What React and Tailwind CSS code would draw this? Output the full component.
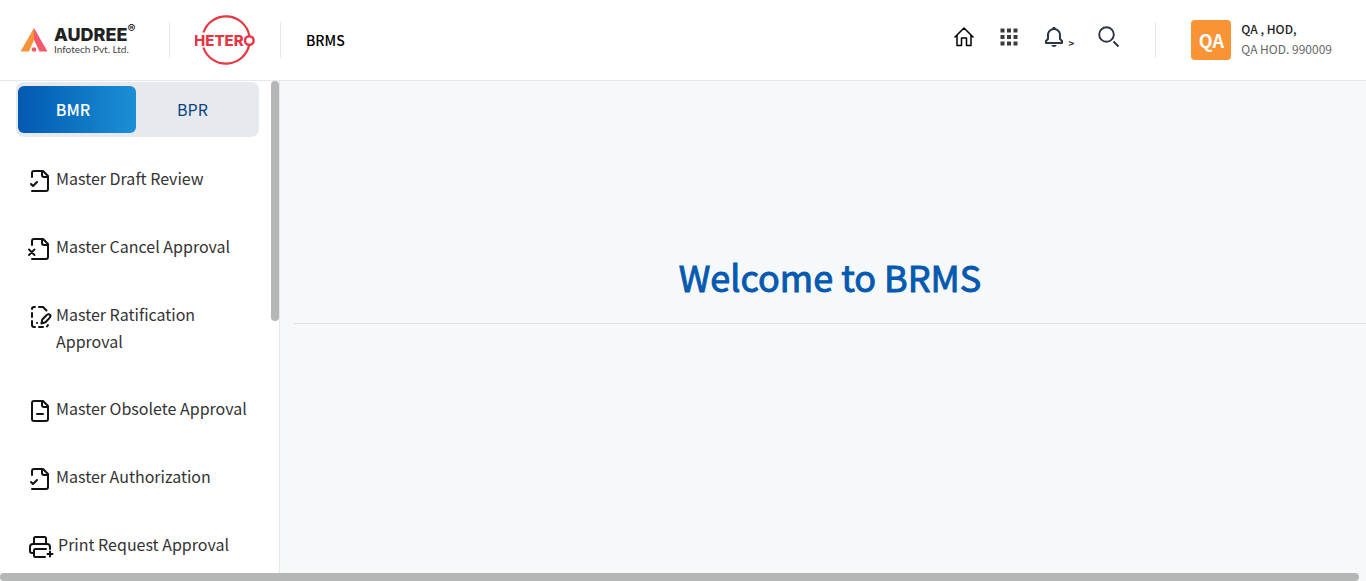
import React from "react";
import { BiBell } from "react-icons/bi";

function FileShell({ children, outline, fold = "M14 2v4a2 2 0 0 0 2 2h4" }) {
  return (
    <svg
      viewBox="0 0 24 24"
      className="size-6 shrink-0 overflow-visible"
      fill="none"
      stroke="currentColor"
      strokeWidth="2"
      strokeLinecap="round"
      strokeLinejoin="round"
      aria-hidden="true"
    >
      <path d={outline} />
      {fold && <path d={fold} />}
      {children}
    </svg>
  );
}

const OPEN_FILE = "M4 22h14a2 2 0 0 0 2-2V7l-5-5H6a2 2 0 0 0-2 2v4";

function FileCheckIcon() {
  return (
    <FileShell outline={OPEN_FILE}>
      <path d="m3 15 2 2 4-4" />
    </FileShell>
  );
}

function FileCancelIcon() {
  return (
    <FileShell outline={OPEN_FILE}>
      <path strokeWidth="1.8" d="m1 12.500 5.500 5.500M6.500 12.500 1 18" />
    </FileShell>
  );
}

function FileMinusIcon() {
  return (
    <FileShell outline="M15 2H6a2 2 0 0 0-2 2v16a2 2 0 0 0 2 2h12a2 2 0 0 0 2-2V7Z">
      <path d="M9 15h6" />
    </FileShell>
  );
}

function FileDraftIcon() {
  return (
    <FileShell outline="M4 4a2 2 0 0 1 2-2h1M11 2h4l3.500 3.500M4 8v4M4 16v4a2 2 0 0 0 2 2h1M11 22h4M19 21.500l1-1.500" fold={null}>
      <path d="M18.200 10.500c1.500-1.500 3-1.500 3.800-.7s.6 2-.6 3.300l-3.900 4.200-4.100 1.200.9-4Z" />
      <path d="M9 18h.1" />
    </FileShell>
  );
}

function PrinterPlusIcon() {
  return (
    <svg
      viewBox="0 0 26 24"
      className="h-6 w-[26px] shrink-0"
      fill="none"
      stroke="currentColor"
      strokeWidth="2"
      strokeLinecap="round"
      strokeLinejoin="round"
      aria-hidden="true"
    >
      <path d="M6 18H4a2 2 0 0 1-2-2v-4a3 3 0 0 1 3-3h14a3 3 0 0 1 3 3v2" />
      <path d="M6 9V3.500A1.500 1.500 0 0 1 7.500 2h9A1.500 1.500 0 0 1 18 3.500V9" />
      <path d="M18 14H7.500A1.500 1.500 0 0 0 6 15.500v5A1.500 1.500 0 0 0 7.500 22H17" />
      <path d="M22 16.500v5M19.500 19h5" />
    </svg>
  );
}

function AudreeLogo() {
  return (
    <a href="#home" className="flex items-center gap-1.5 text-[#222]">
      <svg viewBox="0 0 28 24" className="h-6 w-7" aria-hidden="true">
        <path d="M14 0 0.500 23.500h8.500L14 12Z" fill="#f99336" />
        <path d="M14 0v12l5.500 11.500H27.500Z" fill="#f2596b" />
        <circle cx="14" cy="21.500" r="2.300" fill="#f2596b" />
      </svg>
      <span className="flex flex-col pt-0.5">
        <span className="flex items-start font-['Inter',sans-serif] text-lg leading-4 font-extrabold">
          AUDREE<sup className="-top-1 text-xs leading-none font-semibold">®</sup>
        </span>
        <span className="font-['Lato',sans-serif] text-[10px] leading-3 text-[#444]">Infotech Pvt. Ltd.</span>
      </span>
    </a>
  );
}

function HeteroLogo() {
  return (
    <svg viewBox="0 0 60 50" className="h-[50px] w-[60px]" role="img" aria-label="Hetero">
      <path
        d="M8.400 17.500a23.800 23.800 0 0 1 45.900 3M8.400 32.500a23.800 23.800 0 0 0 45.900-3"
        fill="none"
        stroke="#e93442"
        strokeWidth="2.200"
      />
      <circle cx="54.300" cy="25.500" r="4.300" fill="#fff" stroke="#e93442" strokeWidth="2.400" />
      <text x="-1" y="30.500" fontSize="15" fontWeight="800" fill="#e93442" fontFamily="Inter, sans-serif">
        HETER
      </text>
    </svg>
  );
}

function HomeIcon() {
  return (
    <svg viewBox="0 0 20 20" className="size-5" fill="none" stroke="#000" strokeWidth="1.500" strokeLinejoin="round" strokeLinecap="round" aria-hidden="true">
      <path d="M1 10 10 1l9 9M3 8.500V18.500h4.500V11h5v7.500H17V8.500" />
    </svg>
  );
}

function AppsIcon() {
  const steps = [0.5, 7, 13.5];
  return (
    <svg viewBox="0 0 18 18" className="size-[18px]" fill="#3a3a3a" aria-hidden="true">
      {steps.map((y) => steps.map((x) => <rect key={`${x}-${y}`} x={x} y={y} width="4" height="4" />))}
    </svg>
  );
}

function SearchIcon() {
  return (
    <svg viewBox="0 0 22 22" className="size-[22px]" fill="none" stroke="#2b3543" strokeWidth="1.900" aria-hidden="true">
      <circle cx="8.500" cy="8.500" r="7.300" />
      <path d="m15.500 15.500 5 5" />
    </svg>
  );
}

const MENU = [
  { label: "Master Draft Review", Icon: FileCheckIcon },
  { label: "Master Cancel Approval", Icon: FileCancelIcon },
  { label: "Master Ratification Approval", Icon: FileDraftIcon },
  { label: "Master Obsolete Approval", Icon: FileMinusIcon },
  { label: "Master Authorization", Icon: FileCheckIcon },
  { label: "Print Request Approval", Icon: PrinterPlusIcon },
];

function Divider() {
  return <span className="h-9 w-px bg-[#e5e7eb]" />;
}

function Header() {
  return (
    <header className="flex h-[81px] shrink-0 items-center justify-between border-b border-[#e4e7ec] bg-white pr-[34px] pl-5">
      <div className="flex items-center">
        <div className="w-[149px]">
          <AudreeLogo />
        </div>
        <Divider />
        <div className="px-[25px]">
          <HeteroLogo />
        </div>
        <Divider />
        <span className="ml-[25px] text-sm font-medium text-black">BRMS</span>
      </div>
      <div className="flex items-center">
        <nav className="flex items-center pb-1.5" aria-label="Tools">
          <button type="button" aria-label="Home" className="mr-[26px]"><HomeIcon /></button>
          <button type="button" aria-label="Applications" className="mr-6"><AppsIcon /></button>
          <button type="button" aria-label="Notifications" className="mr-6 flex items-end gap-0.5 text-[#2b3543]">
            <BiBell className="size-6" />
            <span className="text-[10px] leading-3 font-bold">&gt;</span>
          </button>
          <button type="button" aria-label="Search" className="mr-[35px]"><SearchIcon /></button>
        </nav>
        <Divider />
        <div className="ml-[35px] flex items-center gap-2.5">
          <span className="flex size-10 items-center justify-center rounded bg-[#f99336] text-lg font-bold text-white">QA</span>
          <span className="flex flex-col pb-0.5 text-xs leading-5">
            <span className="font-medium text-[#222]">QA , HOD,</span>
            <span className="text-[#666]">QA HOD. 990009</span>
          </span>
        </div>
      </div>
    </header>
  );
}

function Sidebar() {
  return (
    <aside className="flex w-[280px] shrink-0 overflow-hidden border-r border-[#e4e7ec] bg-white">
      <div className="min-w-0 flex-1 pt-px pr-3 pl-4">
        <div role="tablist" className="flex h-[55px] rounded-lg bg-[#e6eaef] px-0.5 py-1">
          <button type="button" role="tab" aria-selected="true" className="w-[118px] rounded-md bg-linear-to-r from-[#0459b0] to-[#1b8fd6] pr-2 pb-0.5 text-base font-medium text-white">
            BMR
          </button>
          <button type="button" role="tab" aria-selected="false" className="flex-1 pr-2 pb-0.5 text-base text-[#0c4283]">
            BPR
          </button>
        </div>
        <nav aria-label="BMR">
          <ul className="mt-7 flex flex-col gap-10 pl-3 text-[#111]">
            {MENU.map(({ label, Icon }) => (
              <li key={label}>
                <a href="#menu" className="flex items-start gap-1">
                  <span className="flex pt-1"><Icon /></span>
                  <span className="text-base leading-[27px] text-[#333]">{label}</span>
                </a>
              </li>
            ))}
          </ul>
        </nav>
      </div>
      <div className="h-60 w-2 shrink-0 rounded-full bg-[#b5b7b7]" />
    </aside>
  );
}

export default function App() {
  return (
    <div className="flex h-screen flex-col overflow-hidden bg-[#f7f8fa] font-['Noto_Sans_CJK_SC',sans-serif]">
      <Header />
      <div className="flex min-h-0 flex-1">
        <Sidebar />
        <main className="min-w-0 flex-1 pt-[165px] pl-3.5">
          <h1 className="border-b border-[#dcdfe3] pb-[17px] text-center text-4xl leading-[60px] font-normal text-[#0459b0] [-webkit-text-stroke:1px_#0459b0]">
            Welcome to BRMS
          </h1>
        </main>
      </div>
      <div className="mr-[7px] h-2 shrink-0 rounded-full bg-[#b5b7b7]" />
    </div>
  );
}
